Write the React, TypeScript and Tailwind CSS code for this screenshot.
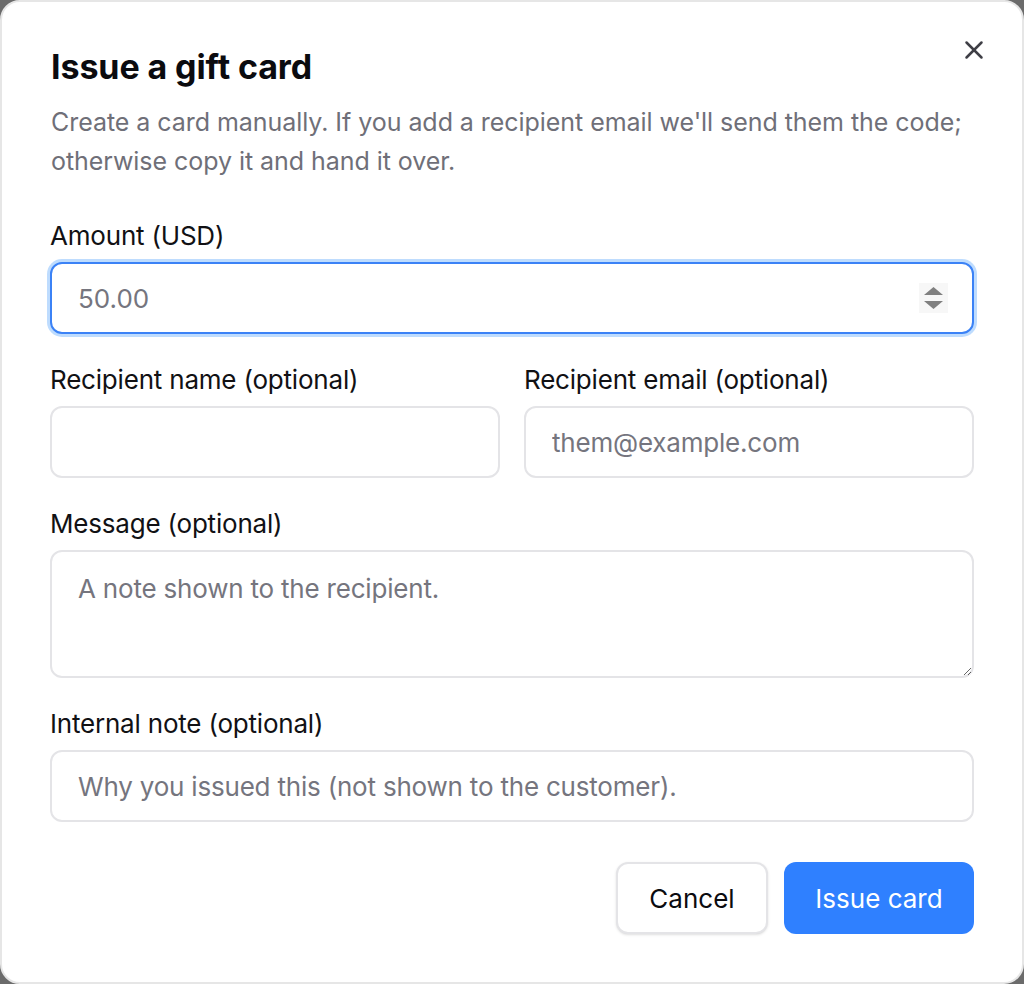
import { X } from 'lucide-react';

const labelCls = 'block text-[26px] leading-[38px] text-[#111114] mb-[7px] tracking-[-0.2px]';
const inputCls =
  'w-full h-[72px] rounded-[12px] border-2 border-[#e4e4e7] bg-white px-[26px] text-[26px] tracking-[-0.2px] text-[#111114] placeholder:text-[#75757e] outline-none';

function Field({ label, children }: { label: string; children: React.ReactNode }) {
  return (
    <div>
      <label className={labelCls}>{label}</label>
      {children}
    </div>
  );
}

export default function App() {
  return (
    <div className="bg-[#6b6b6b] w-[1024px] h-[984px]" style={{ fontFamily: 'Inter, "Noto Sans", sans-serif' }}>
      <div className="relative w-full h-full bg-white rounded-[20px] border-2 border-[#e6e6e6] pt-[45px] px-[48px]">
        <button className="absolute right-[33px] top-[33px] text-[#3f3f46]" aria-label="Close">
          <X size={30} strokeWidth={2} />
        </button>

        <h2 className="pl-px text-[34px] leading-[40px] font-bold text-[#0b0b0f] tracking-[-0.1px]">Issue a gift card</h2>
        <p className="pl-px mt-[16px] text-[25px] leading-[39px] tracking-[-0.05px] text-[#6f6f78]">
          Create a card manually. If you add a recipient email we'll send them the code;
          <br />
          otherwise copy it and hand it over.
        </p>

        <div className="mt-[36px] flex flex-col gap-[27px]">
          <Field label="Amount (USD)">
            <div className="relative">
              <input
                type="text"
                placeholder="50.00"
                className="w-full h-[72px] rounded-[12px] border-2 border-[#3b82f6] ring-[3px] ring-[#93c5fd]/60 bg-white px-[26px] text-[26px] placeholder:text-[#75757e] outline-none"
              />
              <div className="absolute right-[26px] top-[21px] w-[29px] h-[30px] bg-[#f7f7f7] flex flex-col items-center justify-center gap-[6px]">
                <svg width="19" height="8" viewBox="0 0 19 8"><path d="M9.5 0 L19 8 L0 8 Z" fill="#808080" /></svg>
                <svg width="19" height="8" viewBox="0 0 19 8"><path d="M0 0 L19 0 L9.5 8 Z" fill="#808080" /></svg>
              </div>
            </div>
          </Field>

          <div className="grid grid-cols-2 gap-[24px]">
            <Field label="Recipient name (optional)">
              <input type="text" className={inputCls} />
            </Field>
            <Field label="Recipient email (optional)">
              <input type="text" placeholder="them@example.com" className={inputCls} />
            </Field>
          </div>

          <Field label="Message (optional)">
            <textarea
              placeholder="A note shown to the recipient."
              className="block w-full h-[128px] rounded-[12px] border-2 border-[#e4e4e7] bg-white px-[26px] pt-[18px] text-[26px] leading-[38px] tracking-[-0.2px] placeholder:text-[#75757e] outline-none"
            />
          </Field>

          <Field label="Internal note (optional)">
            <input type="text" placeholder="Why you issued this (not shown to the customer)." className={inputCls} />
          </Field>
        </div>

        <div className="mt-[40px] flex justify-end gap-[16px]">
          <button className="h-[72px] w-[152px] rounded-[12px] border-2 border-[#e4e4e7] bg-white text-[26px] text-[#0b0b0f] shadow-sm">
            Cancel
          </button>
          <button className="h-[72px] w-[190px] rounded-[12px] bg-[#2f80ff] text-[26px] text-white">
            Issue card
          </button>
        </div>
      </div>
    </div>
  );
}
